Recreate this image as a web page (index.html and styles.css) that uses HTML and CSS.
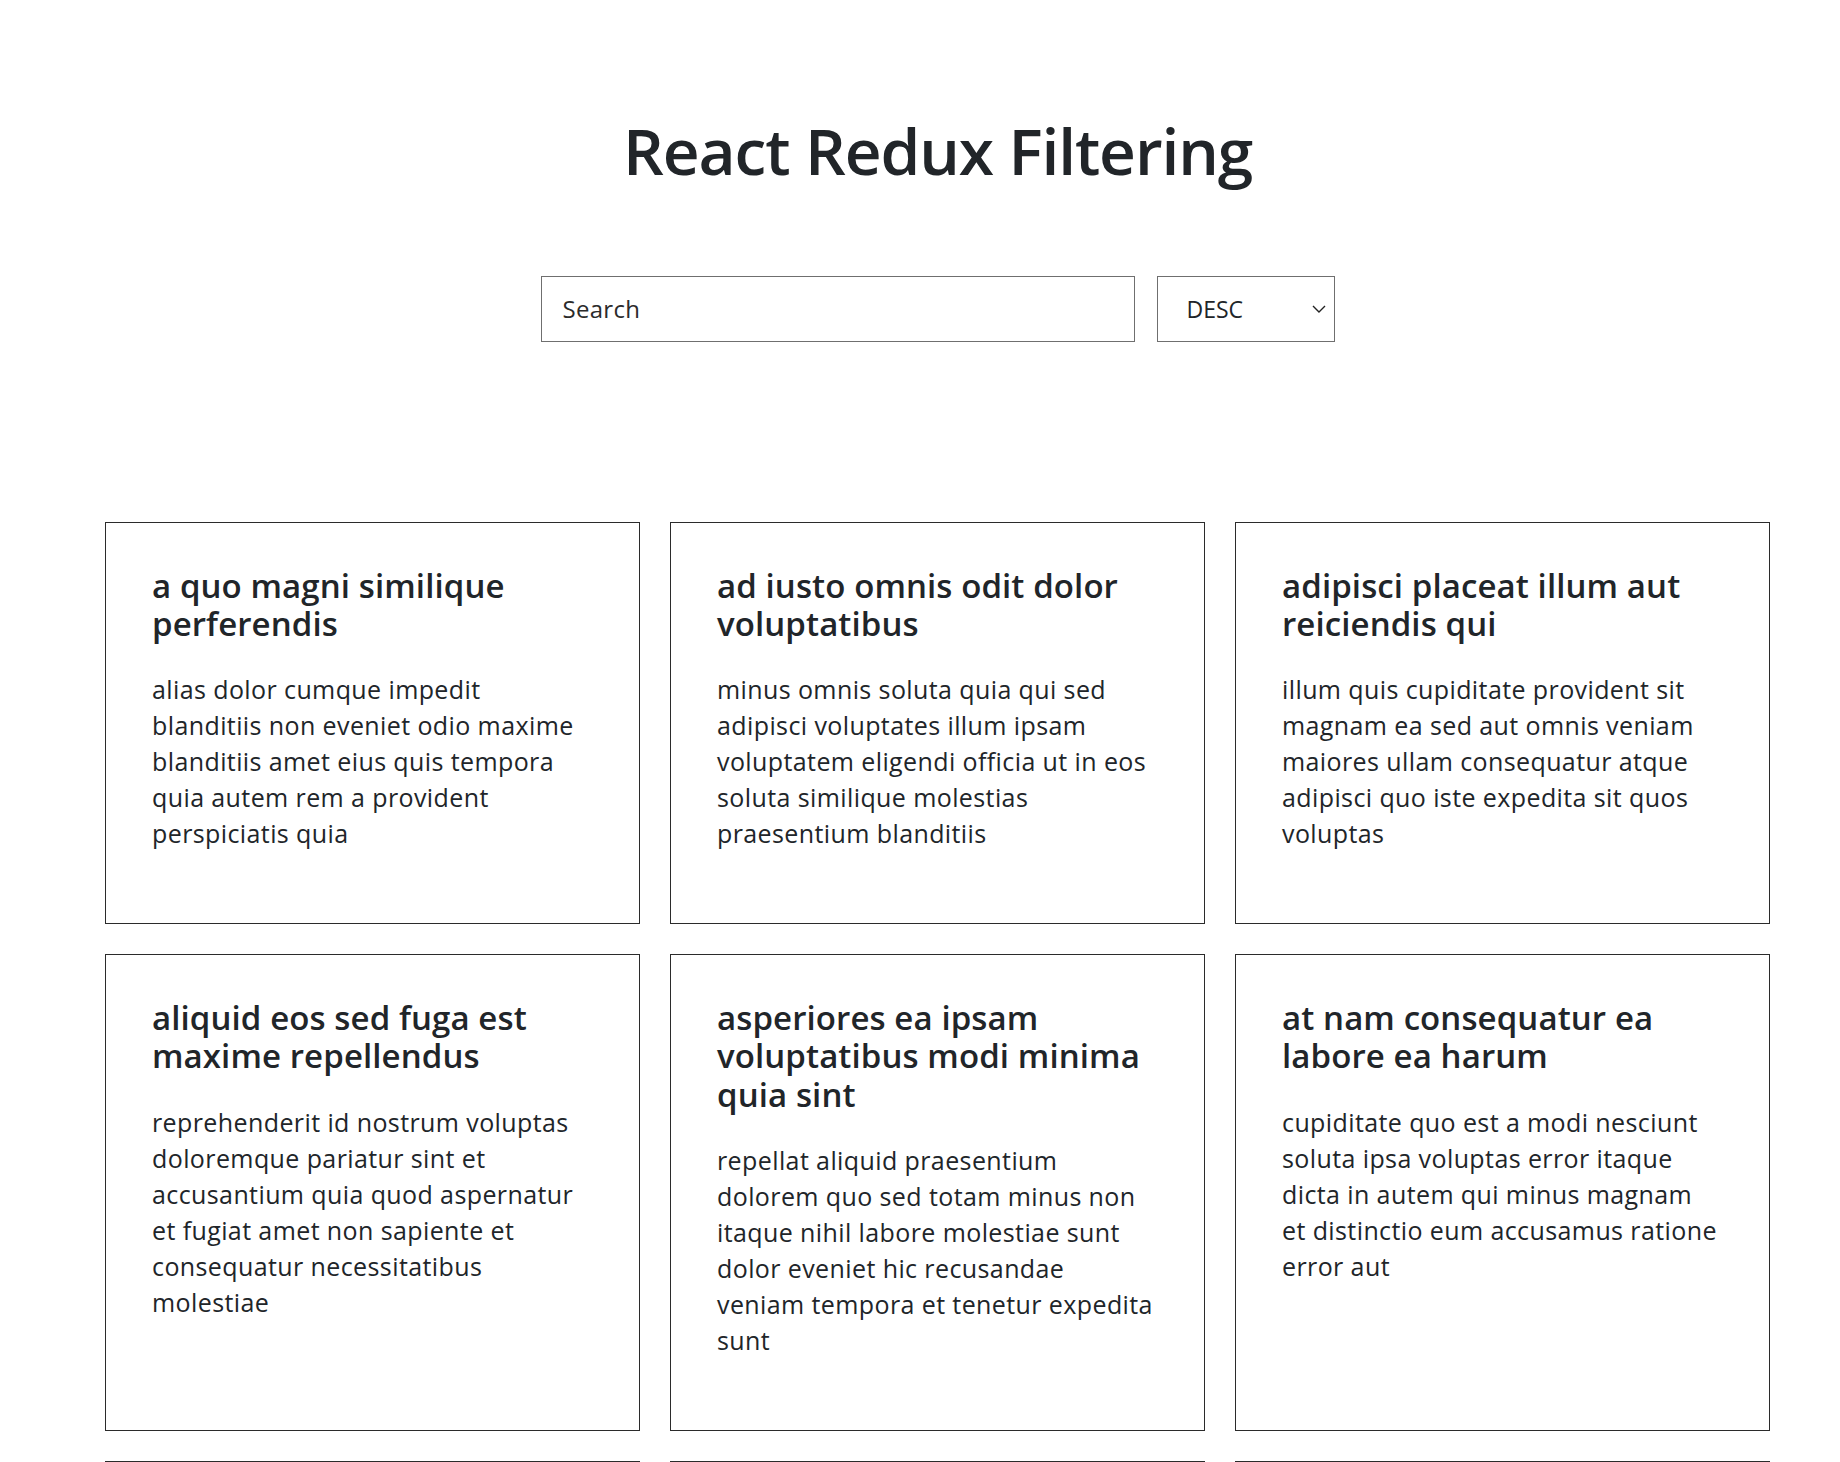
FILE: index.html
```html
<!DOCTYPE html>
<html lang="en">
<head>
<meta charset="utf-8">
<title>React Redux Filtering</title>
<link rel="stylesheet" href="styles.css">
</head>
<body>
<div class="app">
  <h1 class="page-title">React Redux Filtering</h1>
  <div class="controls">
    <input class="search" type="text" placeholder="Search">
    <div class="select-wrap">
      <select class="sort">
        <option>DESC</option>
        <option>ASC</option>
      </select>
      <svg class="chevron" width="14" height="8" viewBox="0 0 14 8"><path d="M1 1 L7 7 L13 1" fill="none" stroke="#222" stroke-width="1.4"/></svg>
    </div>
  </div>
  <div class="grid">
    <div class="card">
      <h2 class="card-title">a quo magni similique perferendis</h2>
      <p class="card-text">alias dolor cumque impedit blanditiis non eveniet odio maxime blanditiis amet eius quis tempora quia autem rem a provident perspiciatis quia</p>
    </div>
    <div class="card">
      <h2 class="card-title">ad iusto omnis odit dolor voluptatibus</h2>
      <p class="card-text">minus omnis soluta quia qui sed adipisci voluptates illum ipsam voluptatem eligendi officia ut in eos soluta similique molestias praesentium blanditiis</p>
    </div>
    <div class="card">
      <h2 class="card-title">adipisci placeat illum aut reiciendis qui</h2>
      <p class="card-text">illum quis cupiditate provident sit magnam ea sed aut omnis veniam maiores ullam consequatur atque adipisci quo iste expedita sit quos voluptas</p>
    </div>
    <div class="card">
      <h2 class="card-title">aliquid eos sed fuga est maxime repellendus</h2>
      <p class="card-text">reprehenderit id nostrum voluptas doloremque pariatur sint et accusantium quia quod aspernatur et fugiat amet non sapiente et consequatur necessitatibus molestiae</p>
    </div>
    <div class="card">
      <h2 class="card-title">asperiores ea ipsam voluptatibus modi minima quia sint</h2>
      <p class="card-text">repellat aliquid praesentium dolorem quo sed totam minus non itaque nihil labore molestiae sunt dolor eveniet hic recusandae veniam tempora et tenetur expedita sunt</p>
    </div>
    <div class="card">
      <h2 class="card-title">at nam consequatur ea labore ea harum</h2>
      <p class="card-text">cupiditate quo est a modi nesciunt soluta ipsa voluptas error itaque dicta in autem qui minus magnam et distinctio eum accusamus ratione error aut</p>
    </div>
    <div class="card">
      <h2 class="card-title">beatae enim quia vel</h2>
      <p class="card-text">enim aspernatur illo distinctio quae praesentium beatae alias amet delectus qui voluptate distinctio odit sint accusantium autem omnis quo molestiae omnis ea eveniet optio</p>
    </div>
    <div class="card">
      <h2 class="card-title">commodi ullam sint et excepturi error explicabo praesentium voluptas</h2>
      <p class="card-text">odio fugit voluptatum ducimus earum autem est incidunt voluptatem odit reiciendis aliquam sunt sequi nulla dolorem non facere repellendus voluptates quia ratione harum vitae ut</p>
    </div>
    <div class="card">
      <h2 class="card-title">dolor sint quo a velit explicabo quia nam</h2>
      <p class="card-text">eos qui et ipsum ipsam suscipit aut sed omnis non odio expedita earum mollitia molestiae aut atque rem suscipit nam impedit esse</p>
    </div>
  </div>
</div>
</body>
</html>
```

FILE: styles.css
```css
* {
  box-sizing: border-box;
}

html, body {
  margin: 0;
  padding: 0;
  background: #ffffff;
}

body {
  font-family: "Open Sans", "Noto Sans", sans-serif;
  color: #212529;
}

.app {
  margin-left: 35px;
  padding: 113px 70px 40px;
}

.page-title {
  margin: 0;
  text-align: center;
  font-size: 64px;
  line-height: 1.2;
  font-weight: 600;
  letter-spacing: -1.1px;
  color: #212529;
}

.controls {
  margin-top: 86px;
  display: flex;
  justify-content: center;
  gap: 22px;
}

.search {
  width: 594px;
  height: 66px;
  border: 1px solid #6f6f6f;
  border-radius: 0;
  padding: 0 21px;
  font-family: "Open Sans", "Noto Sans", sans-serif;
  font-size: 24px;
  letter-spacing: 0.3px;
  color: #212529;
  outline: none;
}

.search::placeholder {
  color: #2b2b2b;
  opacity: 1;
}

.select-wrap {
  position: relative;
  width: 178px;
  height: 66px;
}

.sort {
  appearance: none;
  -webkit-appearance: none;
  width: 100%;
  height: 100%;
  border: 1px solid #6f6f6f;
  border-radius: 0;
  background: #ffffff;
  padding: 0 0 0 29px;
  font-family: "Open Sans", "Noto Sans", sans-serif;
  font-size: 23px;
  color: #212529;
}

.chevron {
  position: absolute;
  right: 9px;
  top: 29px;
  pointer-events: none;
}

.grid {
  margin-top: 180px;
  display: grid;
  grid-template-columns: repeat(3, 1fr);
  gap: 30px;
}

.card {
  border: 1px solid #2b2b2b;
  padding: 44px 49px 72px 46px;
}

.card-title {
  margin: 0 0 28px;
  font-size: 33px;
  line-height: 38.2px;
  font-weight: 600;
  letter-spacing: 0.1px;
  color: #212529;
}

.card-text {
  margin: 0;
  font-size: 25px;
  line-height: 36px;
  font-weight: 400;
  letter-spacing: 0.4px;
  color: #212529;
}
```
